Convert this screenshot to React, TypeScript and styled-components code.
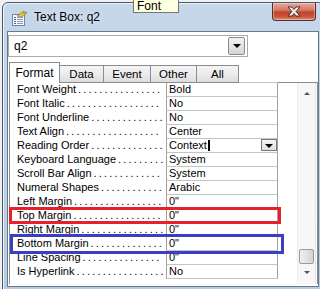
import styled, { createGlobalStyle } from 'styled-components';

interface Property {
  label: string;
  value: string;
  dropdown?: boolean;
  mark?: 'red' | 'blue';
}

const properties: Property[] = [
  { label: 'Font Weight', value: 'Bold' },
  { label: 'Font Italic', value: 'No' },
  { label: 'Font Underline', value: 'No' },
  { label: 'Text Align', value: 'Center' },
  { label: 'Reading Order', value: 'Context', dropdown: true },
  { label: 'Keyboard Language', value: 'System' },
  { label: 'Scroll Bar Align', value: 'System' },
  { label: 'Numeral Shapes', value: 'Arabic' },
  { label: 'Left Margin', value: '0"' },
  { label: 'Top Margin', value: '0"', mark: 'red' },
  { label: 'Right Margin', value: '0"' },
  { label: 'Bottom Margin', value: '0"', mark: 'blue' },
  { label: 'Line Spacing', value: '0"' },
  { label: 'Is Hyperlink', value: 'No' },
];

const tabs = [
  { name: 'Format', width: 51 },
  { name: 'Data', width: 45 },
  { name: 'Event', width: 48 },
  { name: 'Other', width: 47 },
  { name: 'All', width: 43 },
];

// how many leader dots fit after a label in the 149px label column
const measure = (() => {
  const ctx = document.createElement('canvas').getContext('2d');
  if (ctx) ctx.font = '11px "Liberation Sans", Arial, sans-serif';
  return (text: string) => (ctx ? ctx.measureText(text).width : text.length * 6);
})();

const leader = (label: string) => {
  const free = 149 - 2 - measure(label);
  const dotWidth = measure('.') + 2.2;
  return '.'.repeat(Math.max(0, Math.floor(free / dotWidth)));
};

const App = () => {
  return (
    <>
      <GlobalStyle />
      <Window>
        <TitleBar>
          <SheetIcon />
          <Title>Text Box: q2</Title>
          <CloseButton>
            <svg width="16" height="11" viewBox="0 0 16 11">
              <path
                d="M2 1h4l2 2.5L10 1h4l-4 4.5 4 4.5h-4L8 7.5 6 10H2l4-4.5z"
                fill="#f4f4f4"
                stroke="#4a3030"
                strokeWidth="1"
                strokeLinejoin="round"
              />
            </svg>
          </CloseButton>
        </TitleBar>

        <Client>
          <Combo>
            <ComboText>q2</ComboText>
            <ComboButton>
              <Triangle />
            </ComboButton>
          </Combo>

          <TabRow>
            {tabs.map((tab, index) => (
              <Tab key={tab.name} $active={index === 0} $width={tab.width}>
                {tab.name}
              </Tab>
            ))}
          </TabRow>

          <Page>
            <Grid>
              {properties.map((property, index) => (
                <Row key={property.label}>
                  <Label>
                    <LabelText>{property.label}</LabelText>
                    <Leader>{leader(property.label)}</Leader>
                  </Label>
                  <Value $first={index === 0}>
                    {property.value}
                    {property.dropdown && (
                      <>
                        <Caret />
                        <CellButton>
                          <Triangle />
                        </CellButton>
                      </>
                    )}
                  </Value>
                  {property.mark && <Highlight $color={property.mark} />}
                </Row>
              ))}
            </Grid>

            <ScrollBar>
              <ArrowUp />
              <Track>
                <Thumb />
              </Track>
              <ArrowDown />
            </ScrollBar>
          </Page>
        </Client>

        <Tooltip>Font</Tooltip>
      </Window>
    </>
  );
};

const SheetIcon = () => (
  <IconBox>
    <svg width="17" height="17" viewBox="0 0 17 17">
      <rect x="1.5" y="4.5" width="12" height="11" fill="#f6f8fb" stroke="#6f86a6" />
      <rect x="3" y="7" width="2" height="1" fill="#3d6db0" />
      <rect x="6" y="7" width="6" height="1" fill="#8b9bb0" />
      <rect x="3" y="9" width="2" height="1" fill="#3d6db0" />
      <rect x="6" y="9" width="6" height="1" fill="#8b9bb0" />
      <rect x="3" y="11" width="2" height="1" fill="#3d6db0" />
      <rect x="6" y="11" width="6" height="1" fill="#8b9bb0" />
      <rect x="3" y="13" width="2" height="1" fill="#3d6db0" />
      <rect x="6" y="13" width="6" height="1" fill="#8b9bb0" />
      <path d="M6 6 L12 1.5 L16 2.5 L11 7 Z" fill="#e8c23a" stroke="#8a7020" strokeWidth="0.6" />
      <path d="M12 1.5 L16 2.5 L15 4 L11.5 3 Z" fill="#7cb342" />
    </svg>
  </IconBox>
);

export default App;

const GlobalStyle = createGlobalStyle`
  html, body {
    margin: 0;
    padding: 0;
    width: 320px;
    height: 289px;
    overflow: hidden;
    background: #eef1f4;
  }
  body {
    font-family: "Liberation Sans", Arial, sans-serif;
    font-size: 11px;
    color: #000;
  }
`;

const Window = styled.div`
  position: relative;
  box-sizing: border-box;
  margin: 2px 0 0 2px;
  width: 322px;
  height: 290px;
  border: 1px solid #4b5868;
  border-radius: 6px 6px 0 0;
  padding: 0 4px 3px 4px;
  display: flex;
  flex-direction: column;
  background: linear-gradient(180deg, #c6d7ea 0%, #bfd2e7 40%, #b7cbe2 100%);
  box-shadow: inset 1px 1px 0 rgba(255, 255, 255, 0.7);
`;

const TitleBar = styled.div`
  height: 28px;
  display: flex;
  align-items: flex-start;
  flex-shrink: 0;
`;

const IconBox = styled.div`
  width: 17px;
  height: 17px;
  margin: 7px 0 0 4px;
`;

const Title = styled.div`
  margin: 7px 0 0 6px;
  font-size: 12px;
  line-height: 15px;
  color: #000;
  text-shadow: 0 0 6px rgba(255, 255, 255, 0.9);
`;

const CloseButton = styled.div`
  margin-left: auto;
  margin-right: 3px;
  width: 44px;
  height: 18px;
  box-sizing: border-box;
  border: 1px solid #5a2a24;
  border-top: none;
  border-radius: 0 0 4px 4px;
  display: flex;
  align-items: center;
  justify-content: center;
  background: linear-gradient(180deg, #e7a89a 0%, #d67a68 40%, #c0442c 55%, #c8563c 80%, #e09070 100%);
  box-shadow: inset 0 0 0 1px rgba(255, 255, 255, 0.35);
`;

const Client = styled.div`
  box-sizing: border-box;
  height: 256px;
  border: 1px solid #6a7888;
  background: #ffffff;
  padding: 3px 0 2px 0;
  display: flex;
  flex-direction: column;
`;

const Combo = styled.div`
  box-sizing: border-box;
  width: 240px;
  height: 22px;
  border: 1px solid #a9abb0;
  display: flex;
  align-items: center;
  padding: 0 2px 0 5px;
`;

const ComboText = styled.span`
  flex: 1;
  font-size: 12px;
`;

const ComboButton = styled.div`
  box-sizing: border-box;
  width: 17px;
  height: 18px;
  border: 1px solid #8c8c8c;
  border-radius: 2px;
  background: linear-gradient(180deg, #f2f2f2 0%, #e4e4e4 50%, #d4d4d4 100%);
  display: flex;
  align-items: center;
  justify-content: center;
`;

const Triangle = styled.span`
  width: 0;
  height: 0;
  border-left: 4px solid transparent;
  border-right: 4px solid transparent;
  border-top: 4px solid #000;
`;

const TabRow = styled.div`
  display: flex;
  align-items: flex-end;
  height: 21px;
  margin: 5px 0 -1px 1px;
  position: relative;
  z-index: 1;
`;

const Tab = styled.div<{ $active: boolean; $width: number }>`
  box-sizing: border-box;
  width: ${(p) => p.$width}px;
  height: ${(p) => (p.$active ? 21 : 18)}px;
  margin-right: -1px;
  border: 1px solid #898c95;
  border-bottom: ${(p) => (p.$active ? 'none' : '1px solid #898c95')};
  background: ${(p) =>
    p.$active ? '#ffffff' : 'linear-gradient(180deg, #f4f4f4 0%, #ececec 50%, #dcdcdc 100%)'};
  display: flex;
  align-items: ${(p) => (p.$active ? 'flex-start' : 'center')};
  justify-content: center;
  padding-top: ${(p) => (p.$active ? '3px' : '0')};
  font-size: ${(p) => (p.$active ? '12px' : '11.5px')};
  position: relative;
  z-index: ${(p) => (p.$active ? 2 : 0)};
`;

const Page = styled.div`
  flex: 1;
  margin-left: 1px;
  border: 1px solid #898c95;
  border-bottom: none;
  display: flex;
`;

const Grid = styled.div`
  flex: 1;
  display: flex;
  flex-direction: column;
`;

const Row = styled.div`
  position: relative;
  height: 14px;
  display: flex;
  padding-left: 7px;
  line-height: 13px;
`;

const Label = styled.div`
  width: 149px;
  display: flex;
  overflow: hidden;
  white-space: nowrap;
`;

const LabelText = styled.span`
  flex-shrink: 0;
  padding-right: 2px;
`;

const Leader = styled.span`
  letter-spacing: 2.2px;
`;

const Value = styled.div<{ $first: boolean }>`
  position: relative;
  box-sizing: border-box;
  width: 112px;
  padding-left: 2px;
  border-left: 1px solid #a0a0a0;
  border-right: 1px solid #a0a0a0;
  border-bottom: 1px solid #c4c4c4;
  border-top: ${(p) => (p.$first ? '1px solid #c4c4c4' : 'none')};
  margin-top: ${(p) => (p.$first ? '-1px' : '0')};
  height: ${(p) => (p.$first ? '15px' : '14px')};
  white-space: nowrap;
  display: flex;
  align-items: flex-start;
`;

const Caret = styled.span`
  width: 2px;
  height: 11px;
  margin: 1px 0 0 1px;
  background: #000;
`;

const CellButton = styled.div`
  box-sizing: border-box;
  margin-left: auto;
  width: 16px;
  height: 12px;
  border: 1px solid #7a7a7a;
  background: linear-gradient(180deg, #f4f4f4 0%, #dedede 100%);
  display: flex;
  align-items: center;
  justify-content: center;
  padding-top: 2px;
`;

const Highlight = styled.div<{ $color: 'red' | 'blue' }>`
  position: absolute;
  pointer-events: none;
  box-sizing: border-box;
  border: 3px solid ${(p) => (p.$color === 'red' ? '#e8202a' : '#3a3ec4')};
  left: ${(p) => (p.$color === 'red' ? '-1px' : '0px')};
  top: ${(p) => (p.$color === 'red' ? '-2px' : '-3px')};
  width: ${(p) => (p.$color === 'red' ? '272px' : '274px')};
  height: ${(p) => (p.$color === 'red' ? '17px' : '20px')};
  z-index: 3;
`;

const ScrollBar = styled.div`
  width: 17px;
  margin-right: 1px;
  background: #f7f7f7;
  border-left: 1px solid #ececec;
  border-right: 1px solid #e2e2e2;
  display: flex;
  flex-direction: column;
  align-items: center;
`;

const ArrowUp = styled.span`
  margin-top: 9px;
  width: 0;
  height: 0;
  border-left: 3px solid transparent;
  border-right: 3px solid transparent;
  border-bottom: 3px solid #555;
`;

const ArrowDown = styled.span`
  margin-bottom: 10px;
  width: 0;
  height: 0;
  border-left: 3px solid transparent;
  border-right: 3px solid transparent;
  border-top: 3px solid #555;
`;

const Track = styled.div`
  flex: 1;
  width: 100%;
  display: flex;
  flex-direction: column;
  justify-content: flex-end;
  align-items: center;
  padding-bottom: 7px;
`;

const Thumb = styled.div`
  box-sizing: border-box;
  width: 15px;
  height: 15px;
  border: 1px solid #9a9a9a;
  border-radius: 2px;
  background: linear-gradient(90deg, #f0f0f0 0%, #e2e2e2 50%, #d2d2d2 100%);
`;

const Tooltip = styled.div`
  position: absolute;
  top: -4px;
  left: 130px;
  box-sizing: border-box;
  width: 46px;
  height: 14px;
  border: 1px solid #767676;
  background: #ffffe1;
  font-size: 12px;
  line-height: 13px;
  padding-left: 3px;
  z-index: 5;
`;
